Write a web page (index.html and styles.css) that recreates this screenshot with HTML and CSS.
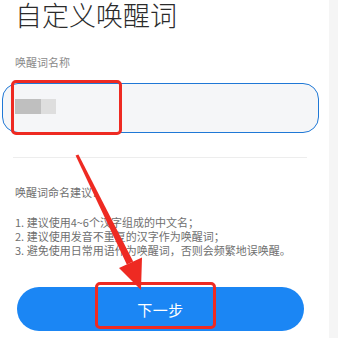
FILE: index.html
```html
<!DOCTYPE html>
<html lang="zh-CN">
<head>
    <meta charset="UTF-8">
    <meta name="viewport" content="width=device-width, initial-scale=1.0">
    <title>自定义唤醒词</title>
    <link rel="stylesheet" href="styles.css">
</head>
<body>
    <div class="page">
        <main class="panel">
            <h1 class="title">自定义唤醒词</h1>

            <div class="label">唤醒词名称</div>
            <div class="field">
                <!-- blurred name -->
                <span class="blur dark"></span><span class="blur light"></span>
            </div>

            <div class="divider"></div>

            <div class="tips">
                <p class="tips-head">唤醒词命名建议：</p>
                <p>1. 建议使用4~6个汉字组成的中文名；</p>
                <p>2. 建议使用发音不重复的汉字作为唤醒词；</p>
                <p>3. 避免使用日常用语作为唤醒词，否则会频繁地误唤醒。</p>
            </div>

            <button class="next">下一步</button>
        </main>
        <aside class="rail"></aside>

        <!-- annotation marks drawn on top of the screenshot -->
        <div class="mark mark-field"></div>
        <div class="mark mark-btn"></div>
        <svg class="arrow" width="338" height="338" viewBox="0 0 338 338">
            <polygon points="75.6,155.6 78.4,154.4 133.2,261.5 126.8,264.5" fill="#ee2a22"/>
            <polygon points="119,268 142,257.5 141,290" fill="#ee2a22"/>
        </svg>
    </div>
</body>
</html>
```

FILE: styles.css
```css
* {
    box-sizing: border-box;
    margin: 0;
    padding: 0;
}

body {
    background: #ffffff;
    font-family: "Noto Sans CJK SC", "Noto Sans", sans-serif;
    width: 338px;
    height: 338px;
    overflow: hidden;
}

.page {
    position: relative;
    display: flex;
    width: 338px;
    height: 338px;
}

.panel {
    width: 329px;
    background: #ffffff;
    display: flex;
    flex-direction: column;
}

.rail {
    flex: 1;
    background: #f5f5f5;
}

.title {
    font-size: 27px;
    line-height: 28px;
    padding-top: 1px;
    font-weight: 300;
    color: #2b2b2b;
    padding-left: 15px;
}

.label {
    margin-top: 27px;
    padding-left: 15px;
    font-size: 11px;
    line-height: 12px;
    color: #8a8a8a;
}

.field {
    margin: 15px 0 0 2px;
    width: 317px;
    height: 50px;
    border: 1.6px solid #1f78d6;
    border-radius: 16px;
    background: #f5f6f8;
    display: flex;
    align-items: center;
    padding: 0 0 3px 11.5px;
}

.blur {
    height: 15px;
    filter: blur(0.6px);
}

.blur.dark { width: 26px; background: #bfbfbf; }
.blur.light { width: 15px; background: #dedede; }

.divider {
    margin: 24px 0 0 13px;
    width: 294px;
    height: 1px;
    background: #ededed;
}

.tips {
    margin-top: 27px;
    padding-left: 15px;
    font-size: 11px;
    line-height: 14px;
    color: #6f6f6f;
}

.tips-head {
    margin-bottom: 16px;
}

.next {
    margin: 30px 0 0 17px;
    width: 287px;
    height: 44px;
    border: none;
    border-radius: 22px;
    background: #1b86f4;
    color: #ffffff;
    font-family: inherit;
    font-size: 15px;
    letter-spacing: 0.5px;
}

/* red annotation boxes */
.mark {
    position: absolute;
    border: 3px solid #ee2a22;
    border-radius: 5px;
}

.mark-field {
    left: 11px;
    top: 80px;
    width: 111px;
    height: 55px;
}

.mark-btn {
    left: 95px;
    top: 282px;
    width: 121px;
    height: 47px;
}

.arrow {
    position: absolute;
    left: 0;
    top: 0;
    pointer-events: none;
}
```
